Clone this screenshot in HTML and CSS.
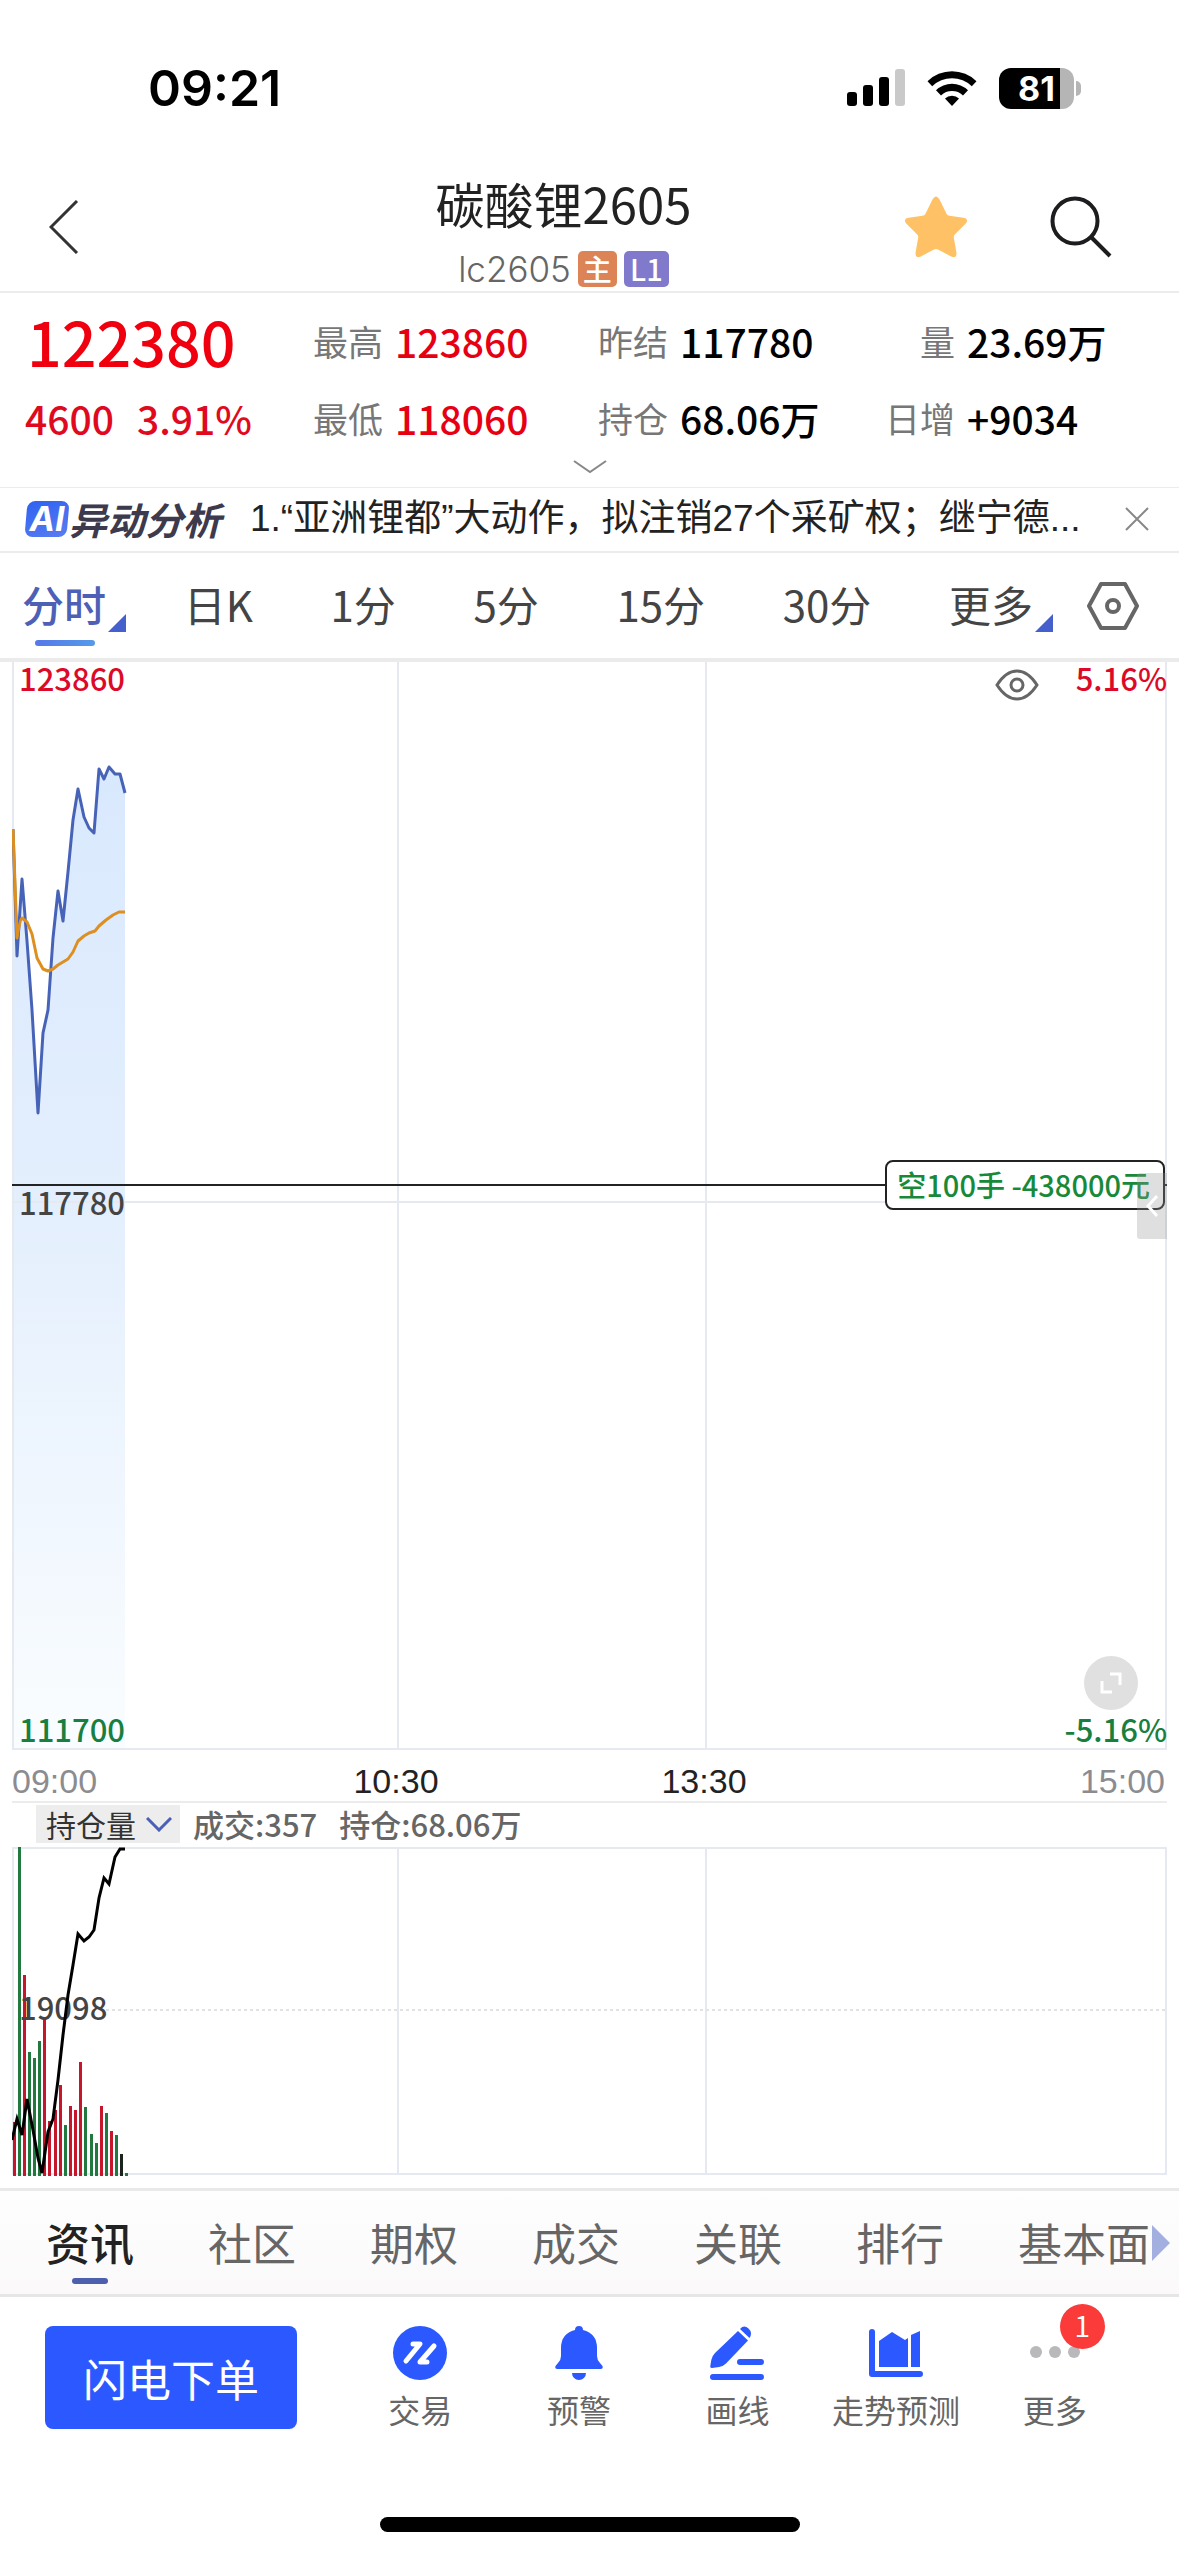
FILE: index.html
```html
<!DOCTYPE html>
<html lang="zh-CN">
<head>
<meta charset="utf-8">
<meta name="viewport" content="width=device-width, initial-scale=1">
<title>碳酸锂2605</title>
<link rel="stylesheet" href="styles.css">
</head>
<body>
<div class="status">
  <span class="status-time">09:21</span>
  <div class="status-icons">
    <svg width="58" height="38" viewBox="0 0 58 38" aria-hidden="true">
      <rect x="0" y="23" width="10" height="14" rx="3"/><rect x="16" y="16" width="10" height="21" rx="3"/><rect x="32" y="8" width="10" height="29" rx="3"/><rect x="48" y="0" width="10" height="37" rx="3" fill="#c9c9c9"/>
    </svg>
    <svg width="50" height="38" viewBox="0 0 50 38" aria-hidden="true">
      <path d="M25 37l-7-7.500a10 10 0 0 1 14 0z"/>
      <path d="M0.500 12.200a35 35 0 0 1 49 0l-4.700 5a28.500 28.500 0 0 0-39.600 0z"/>
      <path d="M9 21.200a23.200 23.200 0 0 1 32 0l-5 5.200a16 16 0 0 0-22 0z"/>
    </svg>
    <span class="battery"><span class="battery-level">81</span></span>
  </div>
</div>

<header class="header">
  <button class="back" aria-label="返回">
    <svg width="30" height="54" viewBox="0 0 30 54" fill="none" stroke="#333" stroke-width="3"><path d="M28 1L2 27l26 26"/></svg>
  </button>
  <div class="heading">
    <h1>碳酸锂2605</h1>
    <p class="code">lc2605 <span class="tag tag-main">主</span><span class="tag tag-level">L1</span></p>
  </div>
  <div class="header-actions">
    <button aria-label="自选">
      <svg width="62" height="62" viewBox="0 0 62 62" fill="#ffc166"><path d="M27.500 3.500q3.500-6 7 0l7 14.200q1 1.800 3 2.100l14 2q6 1.200 2 6l-10.500 10.500q-1.500 1.500-1.200 3.500l2.600 14.500q.6 6.500-5.200 4.200L33 53.500q-2-1-4 0L15.800 60.500q-5.800 2.300-5.200-4.200l2.600-14.500q.3-2-1.200-3.500L1.500 27.800q-4-4.800 2-6l14-2q2-.3 3-2.100z"/></svg>
    </button>
    <button aria-label="搜索">
      <svg width="62" height="62" viewBox="0 0 62 62" fill="none" stroke="#1d1d1f" stroke-width="4"><circle cx="25" cy="25" r="22.500"/><path d="M41 41l19 19"/></svg>
    </button>
  </div>
</header>

<section class="quote">
  <div class="quote-grid">
    <strong class="price">122380</strong>
    <dl class="stat up"><dt>最高</dt><dd>123860</dd></dl>
    <dl class="stat"><dt>昨结</dt><dd>117780</dd></dl>
    <dl class="stat stat-last"><dt>量</dt><dd>23.69万</dd></dl>
    <p class="change"><span>4600</span><span>3.91%</span></p>
    <dl class="stat up"><dt>最低</dt><dd>118060</dd></dl>
    <dl class="stat"><dt>持仓</dt><dd>68.06万</dd></dl>
    <dl class="stat stat-last"><dt>日增</dt><dd>+9034</dd></dl>
  </div>
  <button class="expand" aria-label="展开">
    <svg width="34" height="14" viewBox="0 0 34 14" fill="none" stroke="#888" stroke-width="2"><path d="M1 1l16 11L33 1"/></svg>
  </button>
</section>

<section class="news">
  <span class="ai">AI</span><span class="news-label">异动分析</span>
  <a class="news-text" href="#news">1.“亚洲锂都”大动作，拟注销27个采矿权；继宁德...</a>
  <button class="news-close" aria-label="关闭">
    <svg width="24" height="24" viewBox="0 0 24 24" fill="none" stroke="#888" stroke-width="2"><path d="M1 1l22 22M23 1L1 23"/></svg>
  </button>
</section>

<nav class="periods">
  <div class="period-list">
    <button class="period has-menu active">分时</button>
    <button class="period">日K</button>
    <button class="period">1分</button>
    <button class="period">5分</button>
    <button class="period">15分</button>
    <button class="period">30分</button>
    <button class="period has-menu">更多</button>
  </div>
  <button aria-label="设置">
    <svg width="52" height="48" viewBox="0 0 52 48" fill="none" stroke="#666" stroke-width="4" stroke-linejoin="round"><path d="M14 2h24l12 22-12 22H14L2 24z"/><circle cx="26" cy="24" r="6"/></svg>
  </button>
</nav>

<main class="charts">
  <div class="price-chart">
    <svg class="plot" viewBox="0 0 1155 1088" preserveAspectRatio="none" fill="none">
      <defs><linearGradient id="area" x1="0" y1="0" x2="0" y2="1"><stop offset="0" stop-color="#d9e9fd"/><stop offset=".45" stop-color="#e4effd"/><stop offset="1" stop-color="#fafdff"/></linearGradient></defs>
      <path fill="url(#area)" d="M0 167L5 294L10 217L15 279L20 348L26 451L31 371L36 348L41 276L46 229L51 259L56 210L61 158L66 127L72 155L77 166L82 171L87 107L92 117L97 105L103 112L108 112L113 131V1088H0z"/>
      <path stroke="#e6eaf0" stroke-width="2" d="M1 0V1087H1154V0M0 540H1155M386 0V1088M694 0V1088"/>
      <path stroke="#4763b8" stroke-width="3" stroke-linejoin="round" d="M1 167L5 294L10 217L15 279L20 348L26 451L31 371L36 348L41 276L46 229L51 259L56 210L61 158L66 127L72 155L77 166L82 171L87 107L92 117L97 105L103 112L108 112L113 131"/>
      <path stroke="#dd8f22" stroke-width="3" stroke-linejoin="round" d="M1 167L5 276Q8 257 10 256L15 260L20 272L25 296L31 307L36 309L41 307L46 303L51 300L56 297L61 290L66 279L72 274L77 271L83 269L87 264L94 258L101 253L107 250L113 250"/>
      <path stroke="#222" stroke-width="2" d="M0 523H1155"/>
    </svg>
    <span class="axis axis-max">123860</span>
    <span class="axis axis-mid">117780</span>
    <span class="axis axis-min">111700</span>
    <span class="axis pct-max">5.16%</span>
    <span class="axis pct-min">-5.16%</span>
    <button class="eye" aria-label="显示持仓">
      <svg width="44" height="32" viewBox="0 0 44 32" fill="none" stroke="#666" stroke-width="3"><path d="M2 16Q11 2 22 2t20 14Q33 30 22 30T2 16z"/><circle cx="22" cy="16" r="6"/></svg>
    </button>
    <span class="position">空100手 -438000元</span>
    <button class="drawer" aria-label="展开侧栏">
      <svg width="12" height="22" viewBox="0 0 12 22" fill="none" stroke="#fff" stroke-width="3"><path d="M11 1L2 11l9 10"/></svg>
    </button>
    <button class="fullscreen" aria-label="全屏">
      <svg width="22" height="22" viewBox="0 0 22 22" fill="none" stroke="#fff" stroke-width="3"><path d="M10 2h10v11M2 9v11h10"/></svg>
    </button>
  </div>
  <div class="times">
    <span>09:00</span><span class="time-mid">10:30</span><span class="time-mid">13:30</span><span>15:00</span>
  </div>
  <div class="indicator">
    <span class="indicator-pick">
      <select aria-label="副图指标"><option>持仓量</option></select>
      <svg width="26" height="15" viewBox="0 0 26 15" fill="none" stroke="#4a5fb5" stroke-width="3" aria-hidden="true"><path d="M1 1l12 12L25 1"/></svg>
    </span>
    <span>成交:357</span>
    <span>持仓:68.06万</span>
  </div>
  <div class="volume-chart">
    <svg class="plot" viewBox="0 0 1155 329" preserveAspectRatio="none" fill="none">
      <path stroke="#e6eaf0" stroke-width="2" d="M1 1H1154V327H1zM386 0V327M694 0V327"/>
      <path stroke="#e2e2e2" stroke-width="2" stroke-dasharray="3 3" d="M94 163H1154"/>
      <path fill="#c5162b" d="M1 275h3v54h-3zM11 128h3v201h-3zM31 171h3v158h-3zM36 274h3v55h-3zM42 263h3v66h-3zM47 238h3v91h-3zM57 259h3v70h-3zM62 263h3v66h-3zM67 215h3v114h-3zM88 259h3v70h-3zM98 284h3v45h-3z"/>
      <path fill="#21793f" d="M6 0h3v329h-3zM16 205h3v124h-3zM21 211h3v118h-3zM26 194h3v135h-3zM52 278h3v51h-3zM72 260h3v69h-3zM78 287h3v42h-3zM83 296h3v33h-3zM93 266h3v63h-3zM103 288h3v41h-3zM113 326h3v3h-3z"/>
      <path fill="#1c241e" d="M108 307h3v22h-3z"/>
    </svg>
    <span class="axis volume-mid">19098</span>
    <svg class="plot plot-over" viewBox="0 0 1155 329" preserveAspectRatio="none" fill="none">
      <path stroke="#000" stroke-width="3" d="M0 293L5 272L10 288L15 252L21 283L26 311L30 326L36 285L41 272L46 233L51 188L56 148L61 118L66 87L72 94L77 90L82 83L87 51L92 31L97 37L103 10L108 2H113"/>
    </svg>
  </div>
</main>

<nav class="tabs">
  <div class="tab-list">
    <button class="tab active">资讯</button>
    <button class="tab">社区</button>
    <button class="tab">期权</button>
    <button class="tab">成交</button>
    <button class="tab">关联</button>
    <button class="tab">排行</button>
    <button class="tab">基本面</button>
  </div>
  <svg width="18" height="36" viewBox="0 0 18 36" fill="#a3b0df" aria-hidden="true"><path d="M0 0l18 18L0 36z"/></svg>
</nav>

<footer class="toolbar">
  <button class="order">闪电下单</button>
  <div class="tools">
    <button class="tool">
      <svg width="54" height="54" viewBox="0 0 54 54" fill="#2c59ff"><circle cx="27" cy="27" r="27"/><path d="M20 18h7L13 35M34 36h-7L41 20" fill="none" stroke="#fff" stroke-width="5" stroke-linecap="round" stroke-linejoin="round"/></svg>
      <span>交易</span>
    </button>
    <button class="tool">
      <svg width="54" height="54" viewBox="0 0 54 54" fill="#2c59ff"><path d="M23 4a4 4 0 0 1 8 0q14 3.500 14 18v8q0 4 3 7l2.500 3q1 3-2 3h-43q-3 0-2-3L6 37q3-3 3-7v-8Q9 7.500 23 4zM20 47h14a7 7 0 0 1-14 0z"/></svg>
      <span>预警</span>
    </button>
    <button class="tool">
      <svg width="54" height="54" viewBox="0 0 54 54" fill="#2c59ff"><path d="M28 5l10 9.500-22 23q-3 3-7 3.500l-7 1q-2 0-1.700-2l1-6q.7-4 3.700-7zM30 3q4-4.500 8.500-.5t1 9.500z"/><rect x="27" y="33" width="27" height="6" rx="3"/><rect x="0" y="48" width="54" height="6" rx="3"/></svg>
      <span>画线</span>
    </button>
    <button class="tool">
      <svg width="54" height="54" viewBox="0 0 54 54" fill="#2c59ff"><path d="M0 6q0-3 3-3t3 3v39h45q3 0 3 3t-3 3H3q-3 0-3-3zM10 15L23 6l13 8 3-2v29H10zM42 9l9-4v36h-9z"/></svg>
      <span>走势预测</span>
    </button>
    <button class="tool">
      <svg width="54" height="54" viewBox="0 0 54 54" fill="#b9b9bb"><circle cx="8" cy="26" r="6"/><circle cx="27" cy="26" r="6"/><circle cx="46" cy="26" r="6"/></svg>
      <span>更多</span>
      <span class="badge">1</span>
    </button>
  </div>
</footer>
<div class="home"></div>
</body>
</html>
```
FILE: styles.css
```css
* { box-sizing: border-box; margin: 0; padding: 0; }

body {
  display: flex;
  flex-direction: column;
  min-height: 100vh;
  background: #fff;
  color: #222;
  font-family: "Noto Sans CJK SC", sans-serif;
}

button {
  border: 0;
  background: none;
  color: inherit;
  font: inherit;
  line-height: inherit;
}

svg { display: block; flex: none; }
a { color: inherit; text-decoration: none; }

/* status bar */
.status {
  display: flex;
  align-items: center;
  justify-content: space-between;
  height: 162px;
  padding: 14px 105px 0 148px;
}
.status-time {
  font: 600 50px/60px Inter, sans-serif;
  color: #000;
}
.status-icons { display: flex; align-items: center; gap: 22px; }
.battery {
  position: relative;
  width: 75px;
  height: 41px;
  border-radius: 12px;
  background: linear-gradient(90deg, #000 81%, #b5b5b5 81%);
}
.battery::after {
  content: "";
  position: absolute;
  left: 77px;
  top: 13px;
  width: 5px;
  height: 15px;
  border-radius: 0 5px 5px 0;
  background: #b5b5b5;
}
.battery-level {
  display: block;
  color: #fff;
  font: 700 34px/41px Inter, sans-serif;
  text-align: center;
}

/* header */
.header {
  display: flex;
  align-items: center;
  height: 131px;
  border-bottom: 2px solid #ececec;
}
.back { width: 222px; padding-left: 49px; }
.heading { flex: 1; text-align: center; padding-top: 7px; }
h1 { font-size: 49px; font-weight: 400; line-height: 68px; }
.code {
  display: flex;
  align-items: center;
  justify-content: center;
  gap: 7px;
  margin-top: 10px;
  color: #666;
  font: 300 35px/44px Inter, sans-serif;
}
.tag {
  height: 36px;
  padding: 0 5px;
  border-radius: 5px;
  color: #fff;
  font: 500 29px/34px "Noto Sans CJK SC", sans-serif;
}
.tag-main { background: #dc8456; }
.tag-level { min-width: 45px; background: #8179cb; }
.header-actions { display: flex; gap: 83px; width: 274px; }

/* quote */
.quote { padding: 16px 25px 0; border-bottom: 1px solid #ececec; }
.quote-grid {
  display: grid;
  grid-template-columns: 288fr 285fr 287fr 269fr;
  grid-template-rows: 64px 60px;
  row-gap: 15px;
  align-items: center;
}
.price { padding-left: 2px; color: #f0000f; font-size: 61px; font-weight: 500; line-height: 60px; }
.change { display: flex; gap: 23px; color: #e00a1e; font-size: 39px; font-weight: 500; line-height: 60px; }
.stat { display: flex; align-items: center; gap: 12px; line-height: 60px; color: #000; }
.stat dt { color: #777; font-size: 35px; }
.stat dd { font-size: 39px; font-weight: 500; }
.stat-last dt { width: 70px; text-align: right; }
.up dd { color: #e60012; }
.expand { display: flex; width: 100%; height: 39px; justify-content: center; padding-top: 12px; }

/* news strip */
.news {
  display: flex;
  align-items: center;
  height: 65px;
  padding: 0 30px 2px 26px;
  border-bottom: 2px solid #ececec;
}
.ai {
  position: relative;
  z-index: 0;
  width: 42px;
  color: #fff;
  font: italic 700 34px/36px Inter, sans-serif;
  text-align: center;
}
.ai::before {
  content: "";
  position: absolute;
  inset: 0;
  z-index: -1;
  border-radius: 8px;
  background: linear-gradient(160deg, #2f62f2, #5a7cf0);
  transform: skewX(-5deg);
}
.news-label {
  margin: 0 29px 0 1px;
  color: #3c3a4c;
  font-size: 38px;
  font-weight: 700;
  font-style: italic;
  line-height: 60px;
  white-space: nowrap;
}
.news-text {
  flex: 1;
  min-width: 0;
  overflow: hidden;
  font: 400 37px/60px "Liberation Sans", "Noto Sans CJK SC", sans-serif;
  white-space: nowrap;
}

/* period switcher */
.periods {
  display: flex;
  align-items: center;
  justify-content: space-between;
  height: 109px;
  padding: 0 40px 0 22px;
  border-bottom: 4px solid #ebebeb;
}
.period-list { display: flex; flex: 1; justify-content: space-between; margin-right: 54px; }
.period { position: relative; padding-bottom: 3px; font-size: 42px; line-height: 102px; color: #444; white-space: nowrap; }
.has-menu::after {
  content: "";
  position: absolute;
  right: -20px;
  bottom: 26px;
  width: 18px;
  height: 18px;
  background: #4560cc;
  clip-path: polygon(100% 0, 100% 100%, 0 100%);
}
.period.active { color: #4d60b5; font-weight: 500; }
.period.active::before {
  content: "";
  position: absolute;
  left: 13px;
  bottom: 12px;
  width: 60px;
  height: 6px;
  border-radius: 3px;
  background: linear-gradient(90deg, #5578e8, #559bea);
}

/* charts */
.charts { padding: 0 12px; }
.price-chart { position: relative; height: 1088px; }
.plot { width: 100%; height: 100%; }
.plot-over { position: absolute; inset: 0; }
.axis { position: absolute; left: 7px; font-size: 31px; font-weight: 500; line-height: 40px; }
.axis-max { top: -4px; color: #dc0a28; }
.axis-mid { top: 520px; color: #444; }
.axis-min { bottom: 1px; color: #178040; }
.pct-max { left: auto; right: 0; top: -4px; color: #dc0a28; }
.pct-min { left: auto; right: 0; bottom: 1px; color: #178040; }
.eye { position: absolute; right: 128px; top: 7px; }
.position {
  position: absolute;
  right: 2px;
  top: 498px;
  height: 50px;
  padding: 0 13px 0 10px;
  border: 2px solid #222;
  border-radius: 8px;
  background: #fff;
  color: #178a3a;
  font-size: 29px;
  font-weight: 500;
  line-height: 44px;
  white-space: nowrap;
}
.drawer {
  position: absolute;
  right: 0;
  top: 511px;
  display: flex;
  align-items: center;
  justify-content: center;
  width: 30px;
  height: 66px;
  border-radius: 3px 0 0 3px;
  background: rgba(150, 150, 150, .3);
}
.fullscreen {
  position: absolute;
  right: 29px;
  bottom: 40px;
  display: flex;
  align-items: center;
  justify-content: center;
  width: 54px;
  height: 54px;
  border-radius: 50%;
  background: #e0e0e0;
}
.times {
  display: grid;
  grid-template-columns: 230fr 308fr 308fr 309fr;
  height: 53px;
  border-bottom: 2px solid #ececec;
  color: #8c8c90;
  font: 400 34px/62px "Liberation Sans", sans-serif;
}
.times span:last-child { padding-right: 2px; text-align: right; }
.time-mid { color: #222; text-align: center; }
.indicator {
  display: flex;
  align-items: center;
  gap: 22px;
  height: 44px;
  padding: 0 0 2px 24px;
  color: #666;
  font-size: 31px;
  font-weight: 500;
  line-height: 40px;
}
.indicator-pick {
  display: flex;
  align-items: center;
  width: 144px;
  height: 38px;
  margin-right: -9px;
  padding-left: 10px;
  background: #ededee;
}
.indicator-pick select {
  appearance: none;
  width: 100px;
  border: 0;
  background: none;
  color: #333;
  font: 400 30px/38px "Noto Sans CJK SC", sans-serif;
}
.volume-chart { position: relative; height: 329px; }
.volume-mid { top: 140px; color: #444; }

/* content tabs */
.tabs {
  display: flex;
  align-items: center;
  height: 109px;
  margin-top: 12px;
  padding-right: 9px;
  border-top: 3px solid #e9e9e9;
  border-bottom: 3px solid #e6e6e6;
  background: linear-gradient(#fefefe, #fbf9fa);
}
.tab-list { display: flex; flex: 1; min-width: 0; gap: 74px; padding-left: 46px; overflow: hidden; }
.tab { position: relative; flex: none; font-size: 44px; line-height: 103px; color: #666; }
.tab.active { color: #222; font-weight: 500; }
.tab.active::after {
  content: "";
  position: absolute;
  left: 26px;
  bottom: 10px;
  width: 36px;
  height: 6px;
  border-radius: 3px;
  background: #4d60ae;
}

/* bottom toolbar */
.toolbar { display: flex; padding: 29px 45px 0; }
.order {
  width: 252px;
  height: 103px;
  border-radius: 8px;
  background: #2c59ff;
  color: #fff;
  font-size: 44px;
  white-space: nowrap;
}
.tools { display: flex; flex: 1; margin-left: 44px; }
.tool {
  position: relative;
  display: flex;
  flex: 1;
  flex-direction: column;
  align-items: center;
  gap: 6px;
  color: #666;
  font-size: 32px;
  line-height: 46px;
  white-space: nowrap;
}
.badge {
  position: absolute;
  left: 50%;
  top: -22px;
  width: 45px;
  height: 45px;
  margin-left: 5px;
  border-radius: 50%;
  background: #fa3b3a;
  color: #fff;
  font-size: 28px;
  line-height: 43px;
}
.home {
  width: 420px;
  height: 15px;
  margin: auto auto 24px;
  border-radius: 8px;
  background: #000;
}
```
